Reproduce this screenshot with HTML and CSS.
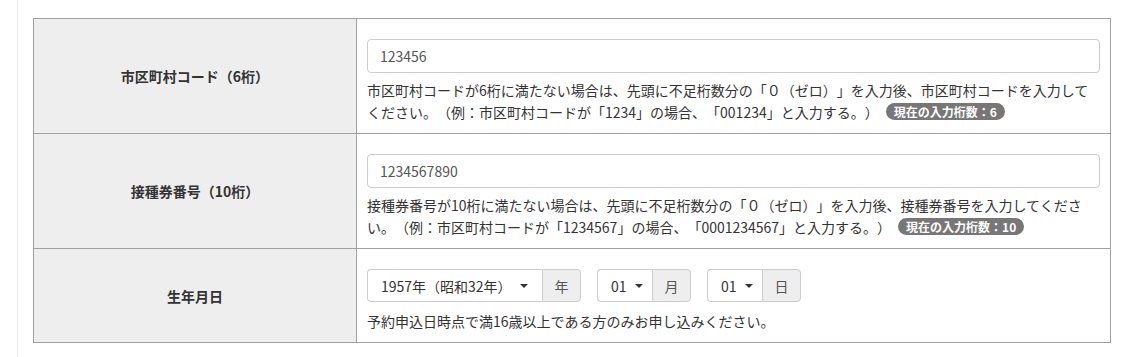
FILE: index.html
```html
<!DOCTYPE html>
<html lang="ja">
<head>
    <meta charset="UTF-8">
    <meta name="viewport" content="width=device-width, initial-scale=1.0">
    <title>接種券情報の入力</title>
    <link rel="stylesheet" href="styles.css">
</head>
<body>
    <div class="page">
        <table class="form-table">
            <tr>
                <th>市区町村コード（6桁）</th>
                <td>
                    <input type="text" class="form-input" value="123456">
                    <p class="help">市区町村コードが6桁に満たない場合は、先頭に不足桁数分の「０（ゼロ）」を入力後、市区町村コードを入力してください。（例：市区町村コードが「1234」の場合、「001234」と入力する。）<span class="badge">現在の入力桁数：6</span></p>
                </td>
            </tr>
            <tr>
                <th>接種券番号（10桁）</th>
                <td>
                    <input type="text" class="form-input" value="1234567890">
                    <p class="help">接種券番号が10桁に満たない場合は、先頭に不足桁数分の「０（ゼロ）」を入力後、接種券番号を入力してください。（例：市区町村コードが「1234567」の場合、「0001234567」と入力する。）<span class="badge">現在の入力桁数：10</span></p>
                </td>
            </tr>
            <tr>
                <th>生年月日</th>
                <td>
                    <div class="date-row">
                        <div class="date-group">
                            <div class="date-select year"><span>1957年（昭和32年）</span><span class="caret"></span></div>
                            <div class="addon">年</div>
                        </div>
                        <div class="date-group">
                            <div class="date-select"><span>01</span><span class="caret"></span></div>
                            <div class="addon">月</div>
                        </div>
                        <div class="date-group">
                            <div class="date-select"><span>01</span><span class="caret"></span></div>
                            <div class="addon">日</div>
                        </div>
                    </div>
                    <p class="help">予約申込日時点で満16歳以上である方のみお申し込みください。</p>
                </td>
            </tr>
        </table>
    </div>
</body>
</html>
```

FILE: styles.css
```css
body {
    margin: 0;
    padding: 0;
    background: #fff;
    color: #333;
    font-family: "Noto Sans CJK JP", "Liberation Sans", sans-serif;
    font-size: 14px;
    text-spacing-trim: space-all;
}

.page {
    margin-left: 17px;
    border-left: 1px solid #e9e9e9;
    padding: 18px 12px 14px 15px;
    min-height: 325px;
}

.form-table {
    width: 1078px;
    border-collapse: collapse;
}

.form-table th,
.form-table td {
    border: 1px solid #a0a0a0;
}

.form-table th {
    width: 320px;
    background: #eeeeee;
    font-weight: bold;
    text-align: center;
    vertical-align: middle;
}

.form-table td {
    padding: 20px 10px 10px 10px;
    vertical-align: top;
}

.form-input {
    display: block;
    box-sizing: border-box;
    width: 100%;
    height: 34px;
    padding: 0 12px;
    border: 1px solid #ccc;
    border-radius: 4px;
    font-family: inherit;
    font-size: 14px;
    color: #555;
}

.help {
    margin: 6px 0 0 0;
    line-height: 22px;
    font-size: 14px;
}

.badge {
    display: inline-block;
    margin-left: 7px;
    padding: 0 8px;
    height: 17px;
    line-height: 17px;
    border-radius: 9px;
    background: #777;
    color: #fff;
    font-size: 12px;
    font-weight: bold;
    vertical-align: 1px;
}

.date-row {
    display: flex;
    gap: 16px;
    margin-bottom: 8px;
}

.date-group {
    display: flex;
    height: 33px;
}

.date-select {
    box-sizing: border-box;
    display: flex;
    align-items: center;
    justify-content: space-between;
    width: 55px;
    padding: 0 9px 0 13px;
    border: 1px solid #ccc;
    border-right: none;
    border-radius: 4px 0 0 4px;
    color: #333;
    background: #fff;
    white-space: nowrap;
}

.date-select.year {
    width: 175px;
    padding-right: 14px;
}

.caret {
    width: 0;
    height: 0;
    border-left: 4px solid transparent;
    border-right: 4px solid transparent;
    border-top: 4px solid #333;
}

.addon {
    box-sizing: border-box;
    display: flex;
    align-items: center;
    justify-content: center;
    width: 39px;
    border: 1px solid #ccc;
    border-radius: 0 4px 4px 0;
    background: #eee;
    color: #555;
}
```
